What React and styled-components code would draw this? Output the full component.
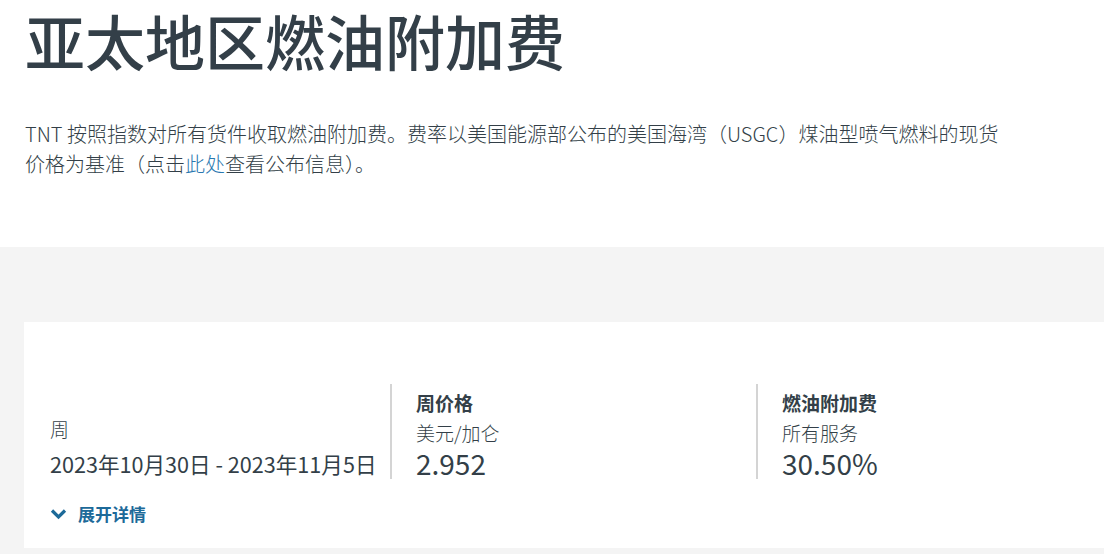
import React from 'react'
import styled, { createGlobalStyle } from 'styled-components'

const GlobalStyle = createGlobalStyle`
  html, body {
    margin: 0;
    padding: 0;
    background: #fff;
    overflow: hidden;
  }
  body {
    font-family: "Noto Sans CJK SC", "Noto Sans", sans-serif;
    color: #333f48;
  }
`

const Intro = styled.section`
  padding: 4px 25px 68px;
`

const Title = styled.h1`
  margin: 0;
  font-size: 60px;
  line-height: 72px;
  font-weight: 500;
  color: #333f48;
`

const Lead = styled.p`
  margin: 43px 0 0;
  max-width: 990px;
  font-size: 20px;
  line-height: 30px;
  font-weight: 300;
  color: #333f48;

  a {
    color: #2a78b0;
    text-decoration: none;
  }
`

const Band = styled.section`
  background: #f4f4f4;
  padding: 75px 0 6px 24px;
`

const Card = styled.div`
  background: #fff;
  height: 226px;
  padding: 62px 0 0 26px;
  box-sizing: border-box;
`

const Stats = styled.div`
  display: grid;
  grid-template-columns: 340px 366px 1fr;
  height: 95px;
`

const Stat = styled.div`
  display: flex;
  flex-direction: column;
  justify-content: ${p => (p.$bottom ? 'flex-end' : 'flex-start')};
  padding: ${p => (p.$divided ? '4px 0 0 24px' : '0')};
  border-left: ${p => (p.$divided ? '2px solid #d4d4d4' : 'none')};
`

const Label = styled.div`
  font-size: 19px;
  line-height: 30px;
  font-weight: ${p => (p.$strong ? 700 : 300)};
`

const WeekLabel = styled(Label)`
  margin-bottom: 4px;
`

const Value = styled.div`
  font-size: 28px;
  line-height: 30px;
`

const DateRange = styled.div`
  font-size: 21.6px;
  line-height: 32px;
  margin-bottom: -1px;
`

const Toggle = styled.button`
  display: flex;
  align-items: center;
  gap: 11px;
  margin-top: 20px;
  padding: 0;
  border: 0;
  background: none;
  cursor: pointer;
  font-family: inherit;
  font-size: 17px;
  font-weight: 700;
  line-height: 30px;
  color: #1d6a99;

  svg {
    width: 17px;
    height: 16px;
  }
`

const App = () => {
  return (
    <>
      <GlobalStyle />
      <Intro>
        <Title>亚太地区燃油附加费</Title>
        <Lead>
          TNT 按照指数对所有货件收取燃油附加费。费率以美国能源部公布的美国海湾（USGC）煤油型喷气燃料的现货价格为基准（点击<a href="#">此处</a>查看公布信息）。
        </Lead>
      </Intro>
      <Band>
        <Card>
          <Stats>
            <Stat $bottom>
              <WeekLabel>周</WeekLabel>
              <DateRange>2023年10月30日 - 2023年11月5日</DateRange>
            </Stat>
            <Stat $divided>
              <Label $strong>周价格</Label>
              <Label>美元/加仑</Label>
              <Value>2.952</Value>
            </Stat>
            <Stat $divided>
              <Label $strong>燃油附加费</Label>
              <Label>所有服务</Label>
              <Value>30.50%</Value>
            </Stat>
          </Stats>
          <Toggle>
            <svg viewBox="0 0 17 16" fill="none">
              <path d="M2 4.5l6.5 6.5 6.5-6.5" stroke="currentColor" strokeWidth="3.2" />
            </svg>
            展开详情
          </Toggle>
        </Card>
      </Band>
    </>
  )
}

export default App
